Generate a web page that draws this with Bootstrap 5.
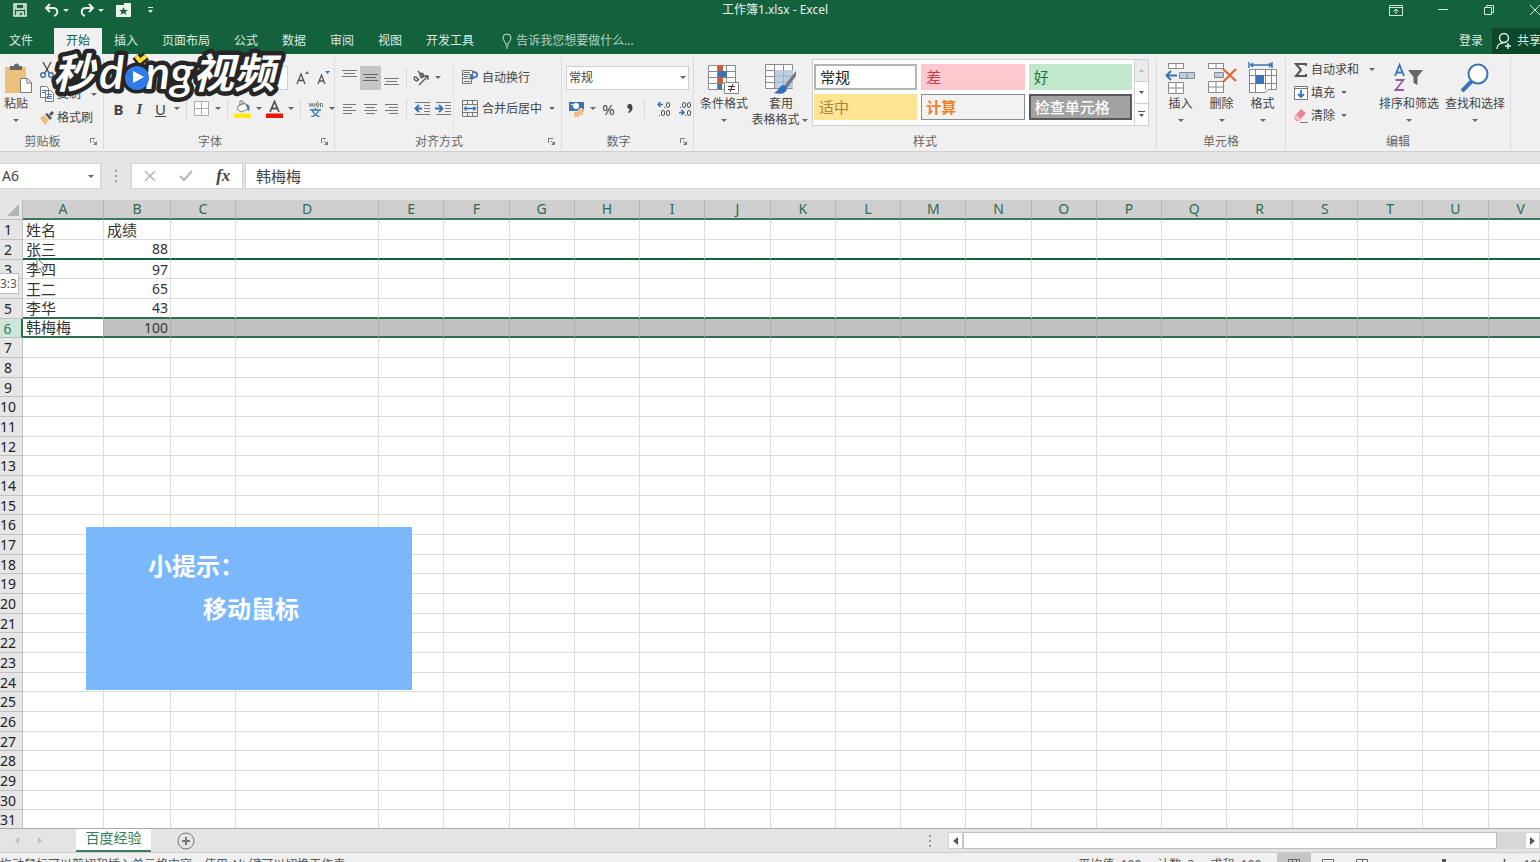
<!DOCTYPE html>
<html lang="zh-CN">
<head>
<meta charset="utf-8">
<meta name="viewport" content="width=device-width, initial-scale=1">
<title>工作簿1.xlsx - Excel</title>
<link href="https://cdn.jsdelivr.net/npm/bootstrap@5.3.0/dist/css/bootstrap.min.css" rel="stylesheet">
<style>
:root{--green:#14613d;--ink:#444;--blue:#3b73b5}
body{font:12px/16px "Noto Sans","Noto Sans CJK SC",sans-serif;color:var(--ink);height:100vh;overflow:hidden;background:#e4e4e4}
.app{height:calc(100vh + 14px);width:calc(100% + 14px)}
button,select,input{font:inherit;color:inherit}
button{background:none;border:0;padding:0;white-space:nowrap}
svg{display:block;flex:none}
.caret{width:11px;height:16px;display:flex;align-items:center;justify-content:center;flex:none}
.caret::before{content:"";border:3px solid transparent;border-top-color:#666;border-bottom:0}
/* title bar and tabs */
.titlebar{background:var(--green);color:#e8f2ec;height:20px}
.titlebar .caret::before{border-top-color:#dfeee6}
.quick button{height:20px}
.quick .undo{margin-left:12px}
.quick .open{margin-left:10px}
.quick .custom{margin-left:12px}
.window{gap:34px;padding-right:13px}
.tabs{background:var(--green);color:#dcebe3;height:34px;padding-top:8px}
.tabs button{height:26px;padding:0 12px}
.tabs .filetab{width:54px;padding:0 0 0 9px;text-align:left}
.tabs .current{background:#f1f1f1;color:var(--green)}
.tabs .hint{color:#b4d2c2;padding:0 0 0 16px;gap:4px}
.tabs .login{padding-right:9px}
.tabs .share{background:#0b4728;padding:0 4px;width:62px}
/* ribbon */
.ribbon{background:#f0f0f0;height:98px;border-bottom:1px solid #d0d0d0}
.group{display:flex;flex-direction:column;border-right:1px solid #dadada;margin:4px 0 2px;flex:none}
.group .tools{height:76px;display:flex}
.group .caption{display:flex;height:15px;align-items:center;color:#666}
.caption span{flex:1;text-align:center}
.caption button{width:18px;display:flex;justify-content:center}
.line{display:flex;align-items:center;height:31px}
.ib{width:21px;height:24px;display:flex;align-items:center;justify-content:center;flex:none}
.ib.on{background:#c5c5c5}
.ib.fs-6{font-size:15px!important}
.font-serif{font-family:"Liberation Serif",serif}
.bar{width:1px;height:20px;background:#d8d8d8;margin:0 4px;flex:none}
.big{display:flex;flex-direction:column;align-items:center;padding-top:4px}
.big svg{margin-bottom:2px}
.small3{display:flex;align-items:center;height:23px;gap:3px}
.clip .small3{height:24px}
.pick{appearance:none;background:#fff;border:1px solid #cfcfcf;border-radius:0;height:24px;padding:0 2px;width:100%}
.pickbox{position:relative}
.pickbox .caret{position:absolute;right:1px;top:4px;pointer-events:none}
.gallery{border:1px solid #cfcfcf;background:#fff;height:67px;width:337px;margin-top:1px;display:flex}
.swatches{display:grid;grid-template-columns:repeat(3,1fr);gap:3px 4px;flex:1;padding:4px 2px 5px 1px;font-size:15px}
.swatches button{text-align:left;padding-left:4px;border:1px solid transparent;height:26px}
.scroller{width:14px;border-left:1px solid #cfcfcf;display:flex;flex-direction:column}
.scroller button{flex:1;display:flex;justify-content:center;align-items:center;border-bottom:1px solid #cfcfcf}
/* formula bar */
.formula{height:48px;padding:11px 0 11px;font-size:14px}
.box{background:#fff;border:1px solid #d2d2d2;height:26px}
.namebox{width:101px;border-left:0}
.grip{width:30px}
.fxbox{width:112px;margin-right:2px}
.formula input{border:0;outline:0;background:transparent;min-width:0;padding:0 2px}
.entry{font-size:15px}
.fx{font:italic bold 17px/20px "Liberation Serif",serif}
/* sheet */
.sheet{position:relative;overflow:hidden;flex:1;min-height:0;background:#fff}
.cells{table-layout:fixed;width:100%;border-collapse:separate;border-spacing:0;line-height:18px;font-size:14px;color:#333;white-space:nowrap}
.cells td,.cells th{padding:0 2px;border-right:1px solid #dcdcdc;border-bottom:1px solid #dcdcdc;height:20px}
.cells tbody tr:nth-child(3n) td,.cells tbody tr:nth-child(3n) th{height:19px;line-height:17px}
.cells thead th{background:#cfcfcf;color:#2f6b50;font-weight:400;text-align:center;border-bottom:2px solid #3b7a5c;border-right-color:#b5b5b5;height:20px}
.cells thead .corner{background:#e6e6e6;border-bottom:1px solid #bbb}
.cells tbody th{background:#e6e6e6;font-weight:400;text-align:center;padding:0 6px 0 0;border-color:#c0c0c0;color:#222}
.cells .word{font-size:15px;padding-left:3px}
.cells .num{text-align:right}
.cells tr.picked td{background:#c2c2c2;border-bottom:2px solid #2c6f4f;border-right-color:#b0b0b0}
.cells tr.picked td.word{background:#fff}
.cells tr.picked th{background:#cde6d9;color:#2f7d59;border-right:2px solid #2c6f4f}
.cells tr.above td{border-bottom:2px solid #2c6f4f}
.cells tr.drop td{border-bottom:2px solid #13603c}
.dragtip{position:absolute;left:-1px;top:73px;width:20px;height:21px;background:#fff;border:1px solid #bbb;color:#555;line-height:19px}
.pointer{position:absolute;left:36px;top:57px}
.note{position:absolute;left:86px;top:327px;width:326px;height:163px;background:#7ab8fb;color:#fff;font-size:24px;line-height:43px;font-weight:700;padding:17px 0 0 62px}
.note p{margin:0}
.note p+p{padding-left:55px}
.watermark{position:absolute;left:46px;top:46px;z-index:3;pointer-events:none}
/* sheet tabs and status */
.sheetbar{height:25px;border-top:1px solid #ababab;border-bottom:1px solid #cdcdcd;background:#e4e4e4}
.sheettab{background:#fff;color:#2f7d59;font-size:14px;width:75px;height:23px;border-bottom:2px solid #3f7f62;line-height:18px;padding-bottom:3px}
.hbar{width:625px;padding-right:14px}
.arrowbtn{width:15px;height:17px;background:#fff;border:1px solid #d0d0d0;display:flex;align-items:center;justify-content:center}
.thumb{background:#fff;border:1px solid #bdbdbd;height:17px;flex:1}
.track{width:28px;height:17px;background:#d8d8d8}
.status{height:23px;background:#f0f0f0;color:#555;line-height:23px}
.status .ib{width:34px}
</style>
</head>
<body>
<svg width="0" height="0" class="position-absolute" aria-hidden="true">
  <defs>
    <g id="launch" fill="none" stroke="#777"><path d="M.5 5V.5H5M3 3l3 3"/><path d="M7 3v4H3z" fill="#777" stroke="none"/></g>
    <g id="grid" fill="#fff" stroke="#8a8a8a"><path d="M.5.5h27v24H.5z"/><path d="M.5 6.500h27M.5 12.500h27M.5 18.500h27M9.500.5v24M18.500.5v24"/></g>
  </defs>
</svg>
<div class="app d-flex flex-column">
  <header class="titlebar d-flex position-relative">
    <div class="quick d-flex align-items-center">
      <button class="ms-2 px-1" aria-label="保存"><svg width="16" height="16" fill="none" stroke="#e8f2ec" stroke-width="1.500"><path d="M2 2h12v12H2zM4 2v5h8V2"/><path d="M5 14v-4h6v4" /><path d="M7 11v2" /></svg></button>
      <button class="undo" aria-label="撤消"><svg width="16" height="16" fill="none" stroke="#e8f2ec" stroke-width="2"><path d="M6 2L2 6l4 4M2 6h7c5 0 6 6 1 8"/></svg></button><span class="caret"></span>
      <button class="ms-2" aria-label="恢复"><svg width="16" height="16" fill="none" stroke="#e8f2ec" stroke-width="2"><path d="M10 2l4 4-4 4M14 6H7c-5 0-6 6-1 8"/></svg></button><span class="caret"></span>
      <button class="open" aria-label="打开"><svg width="16" height="16" fill="#eaf3ee"><path d="M0 3h8V1h7v14H0z"/><path d="M7.500 5l1.200 3H12L9.400 10l1 3-2.900-2-2.900 2 1-3L3 8h3.300z" fill="#14613d"/></svg></button>
      <button class="custom" aria-label="自定义快速访问工具栏"><svg width="12" height="10" fill="#dfeee6"><path d="M4 2h5v1H4zM4 5h5L6.500 8z"/></svg></button>
    </div>
    <div class="position-absolute top-0 start-50 translate-middle-x pt-1 pe-1 lh-1 text-nowrap">工作簿1.xlsx - Excel</div>
    <div class="window ms-auto d-flex align-items-center">
      <button aria-label="功能区显示选项"><svg width="14" height="12" fill="none" stroke="#d5e6dc"><path d="M.5 1.500h13v10H.5zM.5 3.500h13M7 10V5M4.500 7.500L7 5l2.500 2.500"/></svg></button>
      <button aria-label="最小化"><svg width="12" height="12" stroke="#d5e6dc"><path d="M1 5.500h10"/></svg></button>
      <button aria-label="还原"><svg width="12" height="12" fill="none" stroke="#d5e6dc"><path d="M1.500 3.500h7v7h-7zM3.500 3V1.500h7v7H9"/></svg></button>
      <button aria-label="关闭"><svg width="12" height="12" stroke="#d5e6dc"><path d="M1 1l10 10M11 1L1 11"/></svg></button>
    </div>
  </header>
  <nav class="tabs d-flex">
    <button class="filetab">文件</button><button class="current">开始</button><button>插入</button><button>页面布局</button><button>公式</button><button>数据</button><button>审阅</button><button>视图</button><button>开发工具</button>
    <button class="hint d-flex align-items-center"><svg width="10" height="16" fill="none" stroke="#c9dfd3"><path d="M3.500 11C3.500 8 1 8 1 5a4 4 0 018 0c0 3-2.500 3-2.500 6zM3.500 13h3M4 15h2"/></svg>告诉我您想要做什么...</button>
    <button class="login ms-auto">登录</button>
    <button class="share d-flex align-items-center gap-1"><svg width="17" height="18" fill="none" stroke="#e8f2ec" stroke-width="1.400"><circle cx="8" cy="6" r="4.500"/><path d="M1 17c0-4 3-6 6-6M9 14h6M12 11v6"/></svg>共享</button>
  </nav>

  <section class="ribbon d-flex">
    <div class="group" style="width:104px">
      <div class="tools">
        <button class="big ps-1"><svg width="28" height="32"><path d="M1 5h21v26H1z" fill="#eac07c"/><path d="M6 4h4a2.500 2.500 0 015 0h3v4H6z" fill="#666"/><path d="M16.500 16.500h7l4 4v10h-11z" fill="#fff" stroke="#777"/><path d="M23 17v4h4" fill="none" stroke="#777"/></svg><span class="me-1">粘贴</span><span class="caret me-1"></span></button>
        <div class="clip ms-2">
          <button class="small3" aria-label="剪切"><svg width="14" height="18" fill="none" stroke="#555" stroke-width="1.500"><path d="M3 1l6 11M11 1L5 12"/><g stroke="#3b73b5"><circle cx="3" cy="14" r="2.300"/><circle cx="11" cy="14" r="2.300"/></g></svg></button>
          <button class="small3"><svg width="14" height="16" fill="#fff" stroke="#777"><path d="M.5.5h6l2 2v9h-8zM5.500 4.500h5l3 3v8h-8z"/><path d="M7 8.500h5M7 10.500h5M7 12.500h5M2 4.500h3M2 6.500h3" stroke="#3b73b5"/></svg>复制<span class="caret ms-1"></span></button>
          <button class="small3"><svg width="14" height="14"><path d="M0 7l4-3 5 5-4 5z" fill="#edbd7c"/><path d="M5 3l2-1 5 5-2 2zM9 3l3-3 2 2-3 3z" fill="#555"/></svg>格式刷</button>
        </div>
      </div>
      <div class="caption"><span>剪贴板</span><button aria-label="剪贴板设置"><svg width="8" height="8"><use href="#launch"/></svg></button></div>
    </div>

    <div class="group" style="width:231px">
      <div class="tools flex-column pt-1 ps-1">
        <div class="line">
          <div class="pickbox ms-1" style="width:118px"><select class="pick" aria-label="字体"><option></option></select></div>
          <div class="pickbox" style="width:58px"><select class="pick" aria-label="字号"><option></option></select></div>
          <button class="ib ms-1" aria-label="增大字号"><svg width="14" height="16" fill="none" stroke="#555" stroke-width="1.300"><path d="M1 14L5 4l4 10M2.500 10.500h5"/><path d="M9 4l2-3 2 3z" fill="#3b73b5" stroke="none"/></svg></button>
          <button class="ib" aria-label="减小字号"><svg width="14" height="16" fill="none" stroke="#555" stroke-width="1.300"><path d="M1 14L4.500 5 8 14M2.500 11h4"/><path d="M8 1h5l-2.500 3z" fill="#3b73b5" stroke="none"/></svg></button>
        </div>
        <div class="line">
          <button class="ib fw-bold fs-6">B</button><button class="ib fs-6 fst-italic fw-bold font-serif">I</button><button class="ib fs-6 text-decoration-underline">U</button><span class="caret"></span><span class="bar"></span>
          <button class="ib" aria-label="边框"><svg width="15" height="15" fill="#fff" stroke="#aaa"><path d="M.5.5h14v14H.5zM7.500 1v13M1 7.500h13"/></svg></button><span class="caret"></span><span class="bar"></span>
          <button class="ib" aria-label="填充颜色"><svg width="18" height="18"><path d="M5 5l6-2 3 6-7 3-4-3z" fill="#fff" stroke="#777"/><path d="M6 6V1h3v4" fill="none" stroke="#777"/><path d="M12 4c4 0 4 5 3 7-2-1-1-4-3-7z" fill="#3b73b5"/><path d="M0 13.500h17v4.500H0z" fill="#ffe818"/></svg></button><span class="caret"></span>
          <button class="ib" aria-label="字体颜色"><svg width="17" height="18"><path d="M4 12L8.500 1.500 13 12M5.500 8.500h6" fill="none" stroke="#555" stroke-width="1.800"/><path d="M0 13.500h17v4.500H0z" fill="#e81408"/></svg></button><span class="caret"></span><span class="bar"></span>
          <button class="ib" aria-label="拼音"><svg width="15" height="17" fill="none"><path d="M1 3l1.500 4L4 3l1.500 4L7 3M8 5h3c0-3-3-3-3 0s3 2 3 1M12.500 7V3.500q2-1 2 1V7M9 2l1-1" stroke="#777"/><path d="M2 10h11M7.500 8v2M4 10q2 5 8 7M11 10q-2 5-8 7" stroke="#3b73b5" stroke-width="1.300"/></svg></button><span class="caret"></span>
        </div>
      </div>
      <div class="caption"><span>字体</span><button aria-label="字体设置"><svg width="8" height="8"><use href="#launch"/></svg></button></div>
    </div>

    <div class="group" style="width:227px">
      <div class="tools pt-1">
        <div class="ps-1">
          <div class="line">
            <button class="ib" aria-label="顶端对齐"><svg width="15" height="20" stroke="#777"><path d="M0 2.500h15M2 5.500h11M0 8.500h15"/></svg></button>
            <button class="ib on" aria-label="垂直居中"><svg width="15" height="20" stroke="#666"><path d="M0 6.500h15M2 9.500h11M0 12.500h15"/></svg></button>
            <button class="ib" aria-label="底端对齐"><svg width="15" height="20" stroke="#777"><path d="M0 10.500h15M2 13.500h11M0 16.500h15"/></svg></button>
            <span class="bar"></span>
            <button class="ib" aria-label="方向"><svg width="17" height="17" fill="none" stroke="#555" stroke-width="1.300"><path d="M4 9c-2-3-4 0-2 2s4 0 2-2l-1-1M4 9l2 2M5 2l5 6M7 5c2-2 5 1 3 3s-3 0-3-3M6 16L15 7M15 11V7h-4"/></svg></button><span class="caret"></span>
          </div>
          <div class="line">
            <button class="ib" aria-label="左对齐"><svg width="13" height="12" stroke="#777"><path d="M0 1.500h13M0 4.500h9M0 7.500h13M0 10.500h9"/></svg></button>
            <button class="ib" aria-label="居中"><svg width="13" height="12" stroke="#777"><path d="M0 1.500h13M2 4.500h9M0 7.500h13M2 10.500h9"/></svg></button>
            <button class="ib" aria-label="右对齐"><svg width="13" height="12" stroke="#777"><path d="M0 1.500h13M4 4.500h9M0 7.500h13M4 10.500h9"/></svg></button>
            <span class="bar"></span>
            <button class="ib" aria-label="减少缩进"><svg width="16" height="15" stroke="#777"><path d="M1 1.500h15M10 4.500h6M10 7.500h6M10 10.500h6M1 13.500h15"/><path d="M8 7.500H2M5 4L1.500 7.500 5 11" fill="none" stroke="#3b73b5" stroke-width="2"/></svg></button>
            <button class="ib" aria-label="增加缩进"><svg width="16" height="15" stroke="#777"><path d="M1 1.500h15M10 4.500h6M10 7.500h6M10 10.500h6M1 13.500h15"/><path d="M0 7.500h7M4 4l3.500 3.500L4 11" fill="none" stroke="#3b73b5" stroke-width="2"/></svg></button>
          </div>
        </div>
        <div class="border-start ps-2">
          <button class="line gap-1"><svg width="16" height="17" fill="none" stroke="#777"><path d="M.5 1.500h10v4H.5zM.5 5.500h8v4h-8zM.5 9.500h9v5h-9zM2 3.500h6M2 7.500h4M2 12.500h6"/><path d="M11 3q5 0 4 4-1 2-6 1M11 5.500L8.500 8l3 2" stroke="#3b73b5" stroke-width="1.800"/></svg>自动换行</button>
          <button class="line gap-1"><svg width="16" height="17" fill="none" stroke="#777"><path d="M.5.5h15v16H.5zM.5 4.500h15M.5 12.500h15M5.500.5v4M10.500.5v4M5.500 12.500v4M10.500 12.500v4"/><path d="M2.500 8.500h11M4.500 6.500l-2 2 2 2M11.500 6.500l2 2-2 2" stroke="#3b73b5" stroke-width="1.400"/></svg>合并后居中<span class="caret"></span></button>
        </div>
      </div>
      <div class="caption"><span>对齐方式</span><button aria-label="对齐设置"><svg width="8" height="8"><use href="#launch"/></svg></button></div>
    </div>

    <div class="group" style="width:132px">
      <div class="tools flex-column pt-1 px-1">
        <div class="line"><div class="pickbox w-100"><select class="pick" aria-label="数字格式"><option>常规</option></select><span class="caret"></span></div></div>
        <div class="line">
          <button class="ib" aria-label="会计数字格式"><svg width="18" height="18"><path d="M1 2h15v9H1z" fill="#3b73b5"/><circle cx="8" cy="6" r="3" fill="#fff"/><path d="M3 4h2v1H3zM12 8h2v1h-2z" fill="#fff"/><path d="M10 9h6v3h-1v3h-4v2H6v-5h4z" fill="#f0bd89"/></svg></button><span class="caret"></span>
          <button class="ib fs-6">%</button><button class="ib" aria-label="千位分隔样式"><svg width="6" height="10" fill="#444"><path d="M3 0a2.500 2.500 0 00-.5 5Q3 7 1 8l.5 1Q5 8 5.500 4 5.500 0 3 0z"/></svg></button><span class="bar me-2"></span>
          <button class="ib" aria-label="增加小数位数"><svg width="14" height="17" fill="none" stroke="#555"><path d="M6 4.500H1M3.500 2L1 4.500 3.500 7" stroke="#3b73b5" stroke-width="1.500"/><rect x="9.500" y="2.500" width="3" height="5" rx="1.500"/><rect x="4.500" y="10.500" width="3" height="5" rx="1.500"/><rect x="9.500" y="10.500" width="3" height="5" rx="1.500"/><path d="M7 7.500h1M2 15.500h1"/></svg></button>
          <button class="ib" aria-label="减少小数位数"><svg width="14" height="17" fill="none" stroke="#555"><path d="M1 12.500h5M3.500 10L6 12.500 3.500 15" stroke="#3b73b5" stroke-width="1.500"/><rect x="4.500" y="2.500" width="3" height="5" rx="1.500"/><rect x="9.500" y="2.500" width="3" height="5" rx="1.500"/><rect x="9.500" y="10.500" width="3" height="5" rx="1.500"/><path d="M2 7.500h1M7 15.500h1"/></svg></button>
        </div>
      </div>
      <div class="caption"><span>数字</span><button aria-label="数字设置"><svg width="8" height="8"><use href="#launch"/></svg></button></div>
    </div>

    <div class="group" style="width:463px">
      <div class="tools ps-1">
        <button class="big" style="width:52px"><svg width="32" height="32"><use href="#grid" y="3"/><path d="M10 3h5v6h-5zM10 15h5v6h-5z" fill="#cf5c38"/><path d="M10 9h9v6h-9zM10 22h4v5h-4z" fill="#3b73b5"/><path d="M16.500 20.500h14v11h-14z" fill="#fff" stroke="#888"/><path d="M20 24.500h7M20 27.500h7M25 22l-3 8" stroke="#333"/></svg><span>条件格式</span><span class="caret"></span></button>
        <button class="big" style="width:62px"><svg width="32" height="32"><use href="#grid" y="2"/><path d="M10 8h18v18H10z" fill="#bccfe5"/><path d="M10 14h18M10 20h18M18.500 8v18" stroke="#98b5d3"/><path d="M31 9L19 24l3 2 9-12z" fill="#777"/><path d="M19 23c-5 0-4 5-10 8 7 2 13 0 13-5z" fill="#2f70b8"/></svg><span>套用</span><span class="d-flex">表格格式<span class="caret"></span></span></button>
        <div class="gallery">
          <div class="swatches">
            <button class="text-dark" style="border:2px solid #b5b5b5">常规</button><button style="background:#ffc7ce;color:#b8434c">差</button><button style="background:#c2e8cc;color:#1d7733">好</button>
            <button style="background:#ffe593;color:#a9813b">适中</button><button style="background:#f2f2f2;border-color:#8c8c8c;color:#f08328;font-weight:bold">计算</button><button style="background:#a2a2a2;border:2px solid #595959;color:#fff;font-weight:500">检查单元格</button>
          </div>
          <div class="scroller"><button aria-label="上一行" class="bg-body-secondary"><svg width="7" height="5"><path d="M1 4h5L3.500 1z" fill="#bbb"/></svg></button><button aria-label="下一行"><svg width="7" height="5"><path d="M1 1h5L3.500 4z" fill="#555"/></svg></button><button class="border-0" aria-label="更多"><svg width="7" height="8"><path d="M0 0h7v1H0zM1 3h5L3.500 6z" fill="#555"/></svg></button></div>
        </div>
      </div>
      <div class="caption"><span>样式</span></div>
    </div>

    <div class="group" style="width:129px">
      <div class="tools" style="padding-left:3px">
        <button class="big" style="width:41px"><svg width="31" height="32" fill="#fff" stroke="#888"><path d="M3.500 1.500h15v5h-15zM11 1.500v5M3.500 20.500h15v11h-15zM11 20.500v11M3.500 26h15"/><path d="M14.500 10.500h15v6h-15zM22 10.500v6" fill="#bccfe5"/><path d="M12 13.500H2M6 9l-4.500 4.500L6 18" stroke="#3b73b5" stroke-width="2" fill="none"/></svg><span>插入</span><span class="caret"></span></button>
        <button class="big" style="width:41px"><svg width="31" height="32" fill="#fff" stroke="#888"><path d="M2.500 1.500h15v5h-15zM10 1.500v5M2.500 19.500h15v11h-15zM10 19.500v11M2.500 25h15"/><path d="M8.500 10.500h9v5h-9z" fill="#bccfe5"/><path d="M17 7l13 12M30 7L17 20" stroke="#dd6236" stroke-width="2"/></svg><span>删除</span><span class="caret"></span></button>
        <button class="big" style="width:41px"><svg width="30" height="32" fill="#fff" stroke="#888"><path d="M1.500 7.500h27v20h-8l-3 3h-16z"/><path d="M1.500 13.500h27M1.500 21.500h27M7.500 7.500v23M17.500 7.500v20M23.500 7.500v20" fill="none"/><path d="M8 13h8v9H8z" fill="#3b73b5" stroke="none"/><path d="M2 3h22M1 0v6M24 0v6M5 1L3 3l2 2M21 1l2 2-2 2" fill="none" stroke="#3b73b5" stroke-width="1.500"/></svg><span>格式</span><span class="caret"></span></button>
      </div>
      <div class="caption"><span>单元格</span></div>
    </div>

    <div class="group" style="width:225px">
      <div class="tools ps-2">
        <div style="width:82px">
          <button class="small3"><svg width="14" height="16" fill="none" stroke="#555" stroke-width="2"><path d="M12 4V2H2l5 6-5 6h10v-2"/></svg>自动求和<span class="caret ms-1"></span></button>
          <button class="small3"><svg width="14" height="16" fill="#fff" stroke="#777"><path d="M.5 1.500h13v13H.5zM.5 3.500h13"/><path d="M7 5v7M4 9l3 3 3-3" fill="none" stroke="#3b73b5" stroke-width="1.800"/></svg><span>填充</span><span class="caret"></span></button>
          <button class="small3"><svg width="14" height="16"><path d="M0 9l7-8 5 4-7 8H2z" fill="#e98591"/><path d="M0 9l4 4h1l2-2-4-4z" fill="#f5c0c5"/><path d="M6 14.500h8" stroke="#777"/></svg><span>清除</span><span class="caret"></span></button>
        </div>
        <button class="big" style="width:66px"><svg width="30" height="32" fill="none"><path d="M1 14L5.500 3 10 14M2.500 10.500h6" stroke="#3b73b5" stroke-width="1.800"/><path d="M1.500 18h8l-8 10h8.500" stroke="#9357ad" stroke-width="1.800"/><path d="M14 8h15l-5.500 7v8l-4-2v-6z" fill="#666"/></svg><span>排序和筛选</span><span class="caret"></span></button>
        <button class="big" style="width:66px"><svg width="30" height="32" fill="#fff" stroke="#3b73b5"><path d="M12 19L2 29" stroke-width="4"/><circle cx="18" cy="12" r="9.500" stroke-width="2"/></svg><span>查找和选择</span><span class="caret"></span></button>
      </div>
      <div class="caption"><span>编辑</span></div>
    </div>
  </section>

  <section class="formula d-flex">
    <div class="box namebox d-flex align-items-center"><input class="flex-fill" value="A6" size="4" aria-label="名称框"><span class="caret me-1"></span></div>
    <span class="grip d-flex align-items-center justify-content-center"><svg width="2" height="12" fill="#999"><path d="M0 0h2v2H0zM0 5h2v2H0zM0 10h2v2H0z"/></svg></span>
    <div class="box fxbox d-flex align-items-center justify-content-around">
      <button aria-label="取消"><svg width="12" height="12" stroke="#b5b5b5" stroke-width="1.500"><path d="M1 1l10 10M11 1L1 11"/></svg></button>
      <button aria-label="输入"><svg width="14" height="12" fill="none" stroke="#b5b5b5" stroke-width="2"><path d="M1 6l4 4 8-9"/></svg></button>
      <button class="fx" aria-label="插入函数">fx</button>
    </div>
    <div class="box flex-fill d-flex entry"><input class="flex-fill ms-2" value="韩梅梅" aria-label="编辑栏"></div>
  </section>

  <main class="sheet">
    <table class="cells">
      <colgroup id="widths"></colgroup>
      <thead><tr id="letters"></tr></thead>
      <tbody id="rows"></tbody>
    </table>
    <svg class="pointer" width="12" height="18"><path d="M1 1v13l3-3 2.500 5 2-1L6 10h4z" fill="#fff" stroke="#777"/></svg>
    <div class="dragtip">3:3</div>
    <aside class="note"><p>小提示：</p><p>移动鼠标</p></aside>
  </main>

  <footer class="sheetbar d-flex">
    <svg width="76" height="24" fill="#bdbdbd"><path d="M19 8v7l-4-3.500zM38 8v7l4-3.500z"/></svg>
    <button class="sheettab">百度经验</button>
    <button class="px-4" aria-label="新工作表"><svg width="20" height="20" fill="none" stroke="#777"><circle cx="11" cy="10" r="8"/><path d="M7 10h8M11 6v8" stroke-width="2"/></svg></button>
    <div class="ms-auto d-flex align-items-center hbar">
      <svg width="3" height="12" fill="#999" class="me-3"><path d="M0 0h2v2H0zM0 5h2v2H0zM0 10h2v2H0z"/></svg>
      <button class="arrowbtn" aria-label="向左滚动"><svg width="5" height="8"><path d="M5 0v8L0 4z" fill="#555"/></svg></button>
      <span class="thumb"></span><span class="track"></span>
      <button class="arrowbtn" aria-label="向右滚动"><svg width="5" height="8"><path d="M0 0v8l5-4z" fill="#555"/></svg></button>
    </div>
  </footer>
  <footer class="status d-flex">
    <span class="text-nowrap">拖动鼠标可以剪切和插入单元格内容，使用 Alt 键可以切换工作表</span>
    <span class="ms-auto pe-3">平均值: 100</span><span class="pe-3">计数: 3</span><span class="pe-3">求和: 100</span>
    <button class="ib on" aria-label="普通"><svg width="12" height="12" fill="none" stroke="#666"><path d="M.5.5h11v10H.5zM.5 4.500h11M4.500.5v10M8.500.5v10"/></svg></button>
    <button class="ib" aria-label="页面布局"><svg width="12" height="12" fill="none" stroke="#666"><path d="M.5.5h11v10H.5zM3 3.500h6M3 6.500h6"/></svg></button>
    <button class="ib" aria-label="分页预览"><svg width="12" height="12" fill="none" stroke="#666"><path d="M.5.5h11v10H.5zM.5 5.500h11M6.500.5v5"/></svg></button>
    <svg width="144" height="20"><path d="M10 11.500h120" stroke="#aaa"/><path d="M63 6h4v10h-4z" fill="#555"/><path d="M120 11.500h10M125.500 6v10" stroke="#555" stroke-width="1.500"/></svg>
    <span>100%</span>
  </footer>
</div>

<svg class="watermark" width="245" height="62" role="img" aria-label="秒dong视频" font-family="Lato, 'Noto Sans CJK SC', sans-serif" font-weight="600" font-style="italic" font-size="41" stroke-linejoin="round">
  <g fill="#262626" stroke="#262626" stroke-width="9"><circle cx="91" cy="32" r="11"/><path d="M90 10l4 5 6-5" fill="none"/></g>
  <g fill="#fff" stroke="#262626" stroke-width="9" paint-order="stroke">
    <text x="147" y="42">视频</text><text x="99" y="43" font-size="47">ng</text><text x="53" y="43" font-size="47">d</text><text x="7" y="42">秒</text>
  </g>
  <circle cx="91" cy="32" r="12" fill="#2f7be8"/>
  <path d="M87 25l11 6-11 6z" fill="#fff"/>
  <path d="M90 10l4 5 6-5" fill="none" stroke="#fbe02c" stroke-width="4"/>
</svg>

<script>
const letters = 'ABCDEFGHIJKLMNOPQRSTUV'.split('');
const data = [['姓名','成绩'],['张三',88],['李四',97],['王二',65],['李华',43],['韩梅梅',100]];
const fixed = [23,81,67,65,143];
document.getElementById('widths').innerHTML =
  fixed.map(w => `<col style="width:${w}px">`).join('') + '<col>'.repeat(letters.length - 4);
document.getElementById('letters').innerHTML =
  '<th class="corner"><svg width="19" height="16"><path d="M17 2v12H5z" fill="#b4b4b4"/></svg></th>' +
  letters.map(l => `<th>${l}</th>`).join('');
const state = {2:'drop', 5:'above', 6:'picked'};
let html = '';
for (let r = 1; r <= 31; r++) {
  html += `<tr class="${state[r] || ''}"><th>${r}</th>`;
  letters.forEach((_, c) => {
    const v = (data[r-1] || [])[c];
    html += v === undefined ? '<td></td>' : `<td class="${typeof v === 'number' ? 'num' : 'word'}">${v}</td>`;
  });
  html += '</tr>';
}
document.getElementById('rows').innerHTML = html;
</script>
<script src="https://cdn.jsdelivr.net/npm/bootstrap@5.3.0/dist/js/bootstrap.bundle.min.js"></script>
</body>
</html>
